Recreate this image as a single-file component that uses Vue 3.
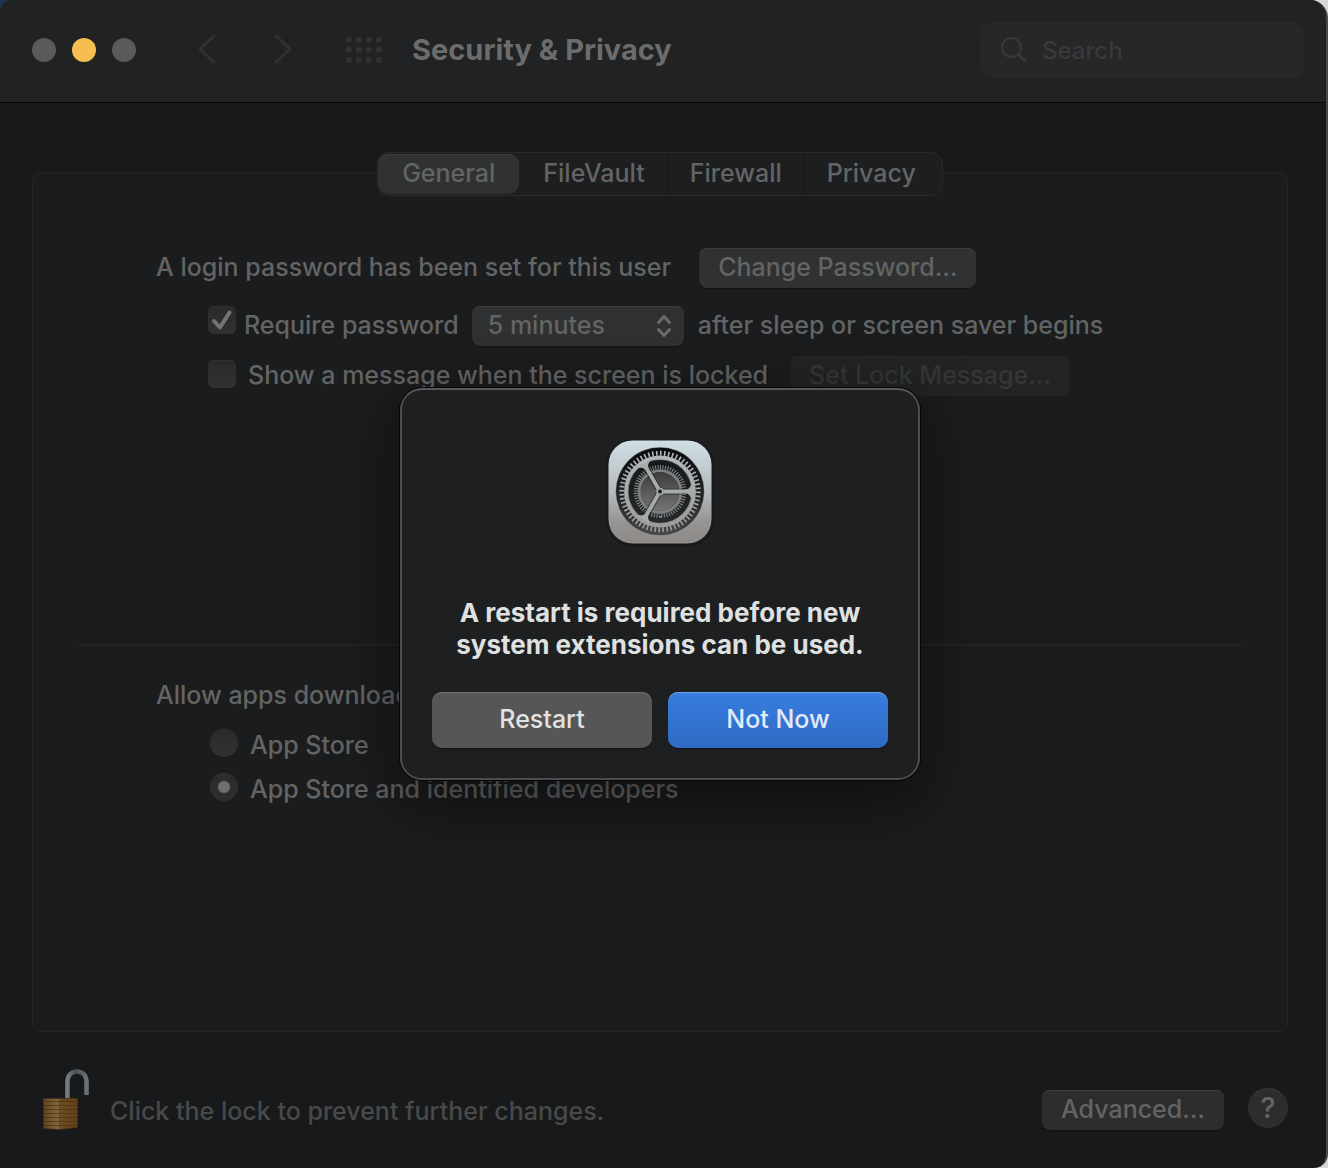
<script setup>
import { ref } from 'vue'

const tabs = ['General', 'FileVault', 'Firewall', 'Privacy']
const active = ref('General')
const requirePassword = ref(true)
const showMessage = ref(false)
const delay = ref('5 minutes')
const source = ref('identified')
const dots = Array.from({ length: 12 }, (_, i) => ({ x: (i % 4) * 10, y: Math.floor(i / 4) * 10 }))
const grain = [32, 36, 40, 44, 48, 52, 56]
</script>

<template>
  <div class="window">
    <header class="toolbar">
      <div class="lights">
        <button class="light" aria-label="Close"></button>
        <button class="light amber" aria-label="Minimize"></button>
        <button class="light" aria-label="Zoom"></button>
      </div>
      <nav class="history">
        <button class="icon-btn" aria-label="Back">
          <svg width="18" height="30" viewBox="0 0 18 30"><path d="M16 1 2 14l14 13" /></svg>
        </button>
        <button class="icon-btn" aria-label="Forward">
          <svg width="18" height="30" viewBox="0 0 18 30"><path d="m2 1 14 13L2 27" /></svg>
        </button>
      </nav>
      <button class="icon-btn" aria-label="Show all">
        <svg width="36" height="26" viewBox="0 0 36 26">
          <rect v-for="d in dots" :key="`${d.x}-${d.y}`" :x="d.x" :y="d.y" width="5.500" height="5.500" rx="1" class="dot" />
        </svg>
      </button>
      <h1>Security &amp; Privacy</h1>
      <label class="search">
        <svg width="26" height="26" viewBox="0 0 26 26"><circle cx="10.500" cy="10.500" r="9.500" /><path d="m17.500 17.500 6.500 6.500" class="handle" /></svg>
        <input type="search" placeholder="Search" aria-label="Search" />
      </label>
    </header>

    <main>
      <div class="tabs" role="tablist">
        <button
          v-for="t in tabs"
          :key="t"
          role="tab"
          :aria-selected="active === t"
          :class="['tab', { on: active === t }]"
          @click="active = t"
        >{{ t }}</button>
      </div>

      <section class="panel">
        <div class="row">
          <span class="text">A login password has been set for this user</span>
          <button class="push first">Change Password…</button>
        </div>
        <div class="row option">
          <span class="box">
            <input id="require" v-model="requirePassword" type="checkbox" />
            <svg v-if="requirePassword" width="28" height="28" viewBox="0 0 28 28"><path d="m6 15 6 6.500L21.500 6.500" /></svg>
          </span>
          <label for="require" class="text near">Require password</label>
          <span class="picker">
            <select v-model="delay" aria-label="Password delay">
              <option>immediately</option>
              <option>5 minutes</option>
              <option>1 hour</option>
            </select>
            <svg width="14" height="24" viewBox="0 0 14 24"><path d="m1.500 8.500 5.500-6 5.500 6M1.500 15.500l5.500 6 5.500-6" /></svg>
          </span>
          <span class="text after">after sleep or screen saver begins</span>
        </div>
        <div class="row option message">
          <span class="box lowered">
            <input id="message" v-model="showMessage" type="checkbox" />
          </span>
          <label for="message" class="text far">Show a message when the screen is locked</label>
          <button class="push lock-msg" disabled>Set Lock Message…</button>
        </div>

        <hr />

        <p class="allow">Allow apps downloaded from:</p>
        <div class="radios">
          <label><input v-model="source" type="radio" name="source" value="store" />App Store</label>
          <label><input v-model="source" type="radio" name="source" value="identified" />App Store and identified developers</label>
        </div>
      </section>

      <footer>
        <button class="icon-btn padlock" aria-label="Lock">
          <svg width="46" height="62" viewBox="0 0 46 62">
            <defs>
              <linearGradient id="brass" x1="0" x2="1">
                <stop offset="0" stop-color="#62431f" />
                <stop offset=".43" stop-color="#80683f" />
                <stop offset=".47" stop-color="#6f4c22" />
                <stop offset="1" stop-color="#654118" />
              </linearGradient>
              <linearGradient id="steel" x1="0" x2="1">
                <stop offset="0" stop-color="#777c7e" />
                <stop offset=".4" stop-color="#4c5153" />
                <stop offset="1" stop-color="#6c7173" />
              </linearGradient>
            </defs>
            <path d="M24.500 30V13.500C24.500 6.500 28.500 2.500 34 2.500s9.500 4 9.500 11V26" fill="none" stroke="url(#steel)" stroke-width="4.600" />
            <path d="M.5 29.500h34v29L16 60.500.5 59.500z" fill="url(#brass)" stroke="#4b2f14" stroke-width=".8" />
            <path v-for="y in grain" :key="y" :d="`M1 ${y + 0.5}h33`" stroke="#4a2f12" stroke-width="1" fill="none" opacity=".65" />
          </svg>
        </button>
        <span class="hint">Click the lock to prevent further changes.</span>
        <button class="push">Advanced…</button>
        <button class="help" aria-label="Help">?</button>
      </footer>
    </main>

    <div class="overlay">
      <div class="dialog" role="alertdialog" aria-labelledby="alert-title">
        <svg class="app-icon" width="104" height="104" viewBox="0 0 104 104">
          <defs>
            <linearGradient id="tile" x2="0" y2="1">
              <stop offset="0" stop-color="#d0dfe5" />
              <stop offset=".5" stop-color="#b4babd" />
              <stop offset=".8" stop-color="#969492" />
              <stop offset="1" stop-color="#8d8a87" />
            </linearGradient>
            <linearGradient id="well" x2="0" y2="1">
              <stop offset="0" stop-color="#08090a" />
              <stop offset=".7" stop-color="#2b2c2d" />
              <stop offset="1" stop-color="#4a4a49" />
            </linearGradient>
            <linearGradient id="metal" gradientUnits="userSpaceOnUse" x1="0" y1="8" x2="0" y2="94">
              <stop offset="0" stop-color="#b4bcbf" />
              <stop offset="1" stop-color="#9a9a99" />
            </linearGradient>
            <linearGradient id="core" x2="0" y2="1">
              <stop offset="0" stop-color="#3c3e3f" />
              <stop offset="1" stop-color="#757472" />
            </linearGradient>
          </defs>
          <rect x=".5" y=".5" width="103" height="103" rx="24" fill="url(#tile)" />
          <circle cx="52" cy="51.500" r="44.300" fill="url(#well)" stroke="#c5c5c4" stroke-opacity=".5" stroke-width=".8" />
          <g fill="none">
            <circle cx="52" cy="51.500" r="38.200" stroke="url(#metal)" stroke-width="5" pathLength="120" stroke-dasharray=".8 1.200" />
            <circle cx="52" cy="51.500" r="34" stroke="url(#metal)" stroke-width="3.800" />
            <circle cx="52" cy="51.500" r="31.800" stroke="#e0e3e4" stroke-opacity=".5" stroke-width=".8" />
            <circle cx="52" cy="51.500" r="25.500" stroke="#1d1e1f" stroke-opacity=".6" stroke-width="11.500" />
            <circle cx="52" cy="51.500" r="24.300" stroke="#85888a" stroke-width="4.200" pathLength="120" stroke-dasharray=".85 1.150" />
            <circle cx="52" cy="51.500" r="20.800" stroke="#7d8082" stroke-width="3" />
          </g>
          <circle cx="52" cy="51.500" r="19.200" fill="url(#core)" />
          <g v-for="a in [0, 120, 240]" :key="a" :transform="`rotate(${a} 52 51.5)`">
            <path d="M52 48.500h24c4 0 6-1.500 7-5v16c-1-3.500-3-5-7-5H52z" fill="#17181a" opacity=".5" />
            <path d="M52 49.600h25c3.500 0 5.200-1.600 6-4.800h1.500v13.400H83c-.8-3.200-2.500-4.800-6-4.800H52z" fill="url(#metal)" />
          </g>
          <circle cx="52" cy="51.500" r="3.800" fill="#a0a6a8" />
          <circle cx="52" cy="51.500" r="1.900" fill="#1c1d1f" />
        </svg>
        <h2 id="alert-title">A restart is required before new system extensions can be used.</h2>
        <div class="actions">
          <button class="act">Restart</button>
          <button class="act primary">Not Now</button>
        </div>
      </div>
    </div>
  </div>
</template>

<style>
body {
  background: linear-gradient(90deg, #1d3550 50%, #d8d8d8 50%);
}
</style>

<style scoped>
* {
  box-sizing: border-box;
}
.window {
  position: relative;
  display: flex;
  flex-direction: column;
  min-height: 100vh;
  border-right: 2px solid #484a4a;
  border-radius: 12px 18px 14px 0;
  overflow: hidden;
  background: #18191b;
  color: #636464;
  font: 500 25px/32px Inter, "Liberation Sans", sans-serif;
}
button,
input,
select {
  margin: 0;
  padding: 0;
  border: 0;
  background: none;
  color: inherit;
  font: inherit;
}
.toolbar {
  display: flex;
  align-items: center;
  height: 103px;
  padding: 0 22px 2px 32px;
  background: #212224;
  border-bottom: 1px solid #08090a;
}
.lights {
  display: flex;
  gap: 16px;
}
.light {
  width: 24px;
  height: 24px;
  border-radius: 50%;
  background: #5a5a5c;
}
.light.amber {
  background: #f6be50;
}
.icon-btn {
  display: flex;
}
.history {
  display: flex;
  gap: 58px;
  margin: 0 54px 0 62px;
}
.history path {
  fill: none;
  stroke: #303133;
  stroke-width: 3;
  stroke-linecap: round;
  stroke-linejoin: round;
}
.dot {
  fill: #303133;
}
h1 {
  flex: 1;
  margin: 0 0 0 30px;
  color: #6b6c6c;
  font-size: 29px;
  font-weight: 700;
  line-height: 36px;
}
.search {
  display: flex;
  align-items: center;
  gap: 15px;
  width: 324px;
  height: 56px;
  padding: 0 21px;
  border-radius: 12px;
  background: #262728;
}
.search svg {
  flex: none;
  fill: none;
  stroke: #39393b;
  stroke-width: 2;
}
.search .handle {
  stroke-width: 3;
  stroke-linecap: round;
}
.search input {
  flex: 1;
  min-width: 0;
  padding-top: 2px;
  outline: 0;
  appearance: none;
  font-size: 24px;
}
.search input::placeholder {
  color: #39393b;
  opacity: 1;
}
main {
  flex: 1;
  display: flex;
  flex-direction: column;
  padding: 49px 38px 37px 32px;
}
.tabs {
  position: relative;
  z-index: 1;
  display: flex;
  align-self: center;
  height: 44px;
  margin-bottom: -24px;
  border: 1px solid #28292a;
  border-radius: 12px;
  background: #1d1e20;
}
.tab {
  padding: 0 22px 2px;
  border-right: 1px solid #18191a;
}
.tab:last-child {
  padding-right: 26px;
  border-right: 0;
}
.tab.on {
  padding: 0 24px 2px;
  margin: 1px 2px 1px 0;
  border: 0;
  border-radius: 10px;
  background: #303231;
  box-shadow: inset 0 1px #3a3c3b;
}
.panel {
  flex: 1;
  padding: 75px 44px 0;
  border: 1px solid #242527;
  border-radius: 10px;
  background: #1b1c1e;
}
.row {
  display: flex;
  align-items: center;
  height: 40px;
  margin-left: 79px;
  white-space: nowrap;
}
.text {
  padding-bottom: 2px;
}
.option {
  margin: 18px 0 0 131px;
}
.message {
  margin-top: 10px;
}
.push {
  height: 40px;
  padding: 0 19px 2px;
  border-radius: 8px;
  background: #303132;
  box-shadow: inset 0 1px #3c3d3d, 0 1px 1px #141516;
}
.push.first {
  margin-left: 28px;
}
.push:disabled {
  background: #222423;
  box-shadow: inset 0 1px #282a29;
  color: #343637;
}
.lock-msg {
  margin-left: 22px;
}
.box {
  display: grid;
  align-self: flex-start;
  width: 28px;
  height: 28px;
}
.box.lowered {
  margin-top: 4px;
}
.box > * {
  grid-area: 1 / 1;
}
.box input,
.radios input {
  width: 28px;
  height: 28px;
  appearance: none;
  border-radius: 6px;
  background: linear-gradient(#282929, #313231);
  box-shadow: inset 0 1px #303131;
}
.box svg {
  pointer-events: none;
  fill: none;
  stroke: #737474;
  stroke-width: 4;
  stroke-linecap: round;
  stroke-linejoin: round;
}
.near {
  margin-left: 8px;
}
.far {
  margin-left: 12px;
}
.picker {
  display: grid;
  align-items: center;
  width: 212px;
  margin-left: 13px;
}
.picker > * {
  grid-area: 1 / 1;
}
.picker select {
  width: 100%;
  height: 40px;
  padding: 0 40px 2px 16px;
  appearance: none;
  border-radius: 8px;
  background: #303132;
  box-shadow: inset 0 1px #3c3d3d, 0 1px 1px #141516;
}
.picker svg {
  justify-self: end;
  margin-right: 13px;
  pointer-events: none;
  fill: none;
  stroke: #6b6c6c;
  stroke-width: 3;
  stroke-linecap: round;
  stroke-linejoin: round;
}
.after {
  margin-left: 14px;
}
hr {
  height: 2px;
  margin: 248px 0 0;
  border: 0;
  background: #222325;
}
.allow {
  margin: 33px 0 0 79px;
}
.radios {
  display: grid;
  justify-items: start;
  gap: 12px;
  margin: 18px 0 0 133px;
}
.radios label {
  display: flex;
  gap: 12px;
}
.radios input {
  border-radius: 50%;
}
.radios input:checked {
  background: radial-gradient(circle, #6f7070 5px, #2c2d2d 7px);
}
footer {
  display: flex;
  align-items: center;
  height: 62px;
  margin: 37px 0 0 11px;
}
.hint {
  flex: 1;
  margin: 22px 0 0 21px;
  color: #484949;
}
footer .push {
  margin-top: 20px;
  background: #2d2d2e;
}
.help {
  width: 40px;
  height: 40px;
  margin: 16px 0 0 24px;
  border-radius: 50%;
  background: #2d2d2e;
  box-shadow: inset 0 1px #363637;
  font-size: 29px;
}
.overlay {
  position: absolute;
  inset: 0 6px 0 0;
  z-index: 2;
  display: flex;
  align-items: center;
  justify-content: center;
}
.dialog {
  display: flex;
  flex-direction: column;
  align-items: center;
  width: 520px;
  padding: 50px 30px 30px;
  border: 2px solid #4b4c4d;
  border-top-color: #58595a;
  border-radius: 22px;
  background: #1e1f21;
  box-shadow: 0 0 0 1px #050506, 0 20px 60px 10px rgba(0, 0, 0, 0.4);
}
.app-icon {
  border-radius: 24px;
  box-shadow: 0 1px 3px #101112;
}
h2 {
  width: 420px;
  margin: 53px 0 31px;
  color: #dfe0e0;
  font-size: 26px;
  font-weight: 700;
  line-height: 32px;
  text-align: center;
}
.actions {
  display: grid;
  grid-template-columns: 1fr 1fr;
  gap: 16px;
  width: 100%;
}
.act {
  height: 56px;
  padding-bottom: 2px;
  border-radius: 10px;
  background: #565656;
  box-shadow: inset 0 1px #737373, 0 1px 1px #111213;
  color: #e2e3e3;
}
.act.primary {
  background: linear-gradient(#387de0, #2e6bc4);
  box-shadow: inset 0 1px #6a9fe9, 0 1px 1px #111213;
  color: #e1eafa;
}
</style>
